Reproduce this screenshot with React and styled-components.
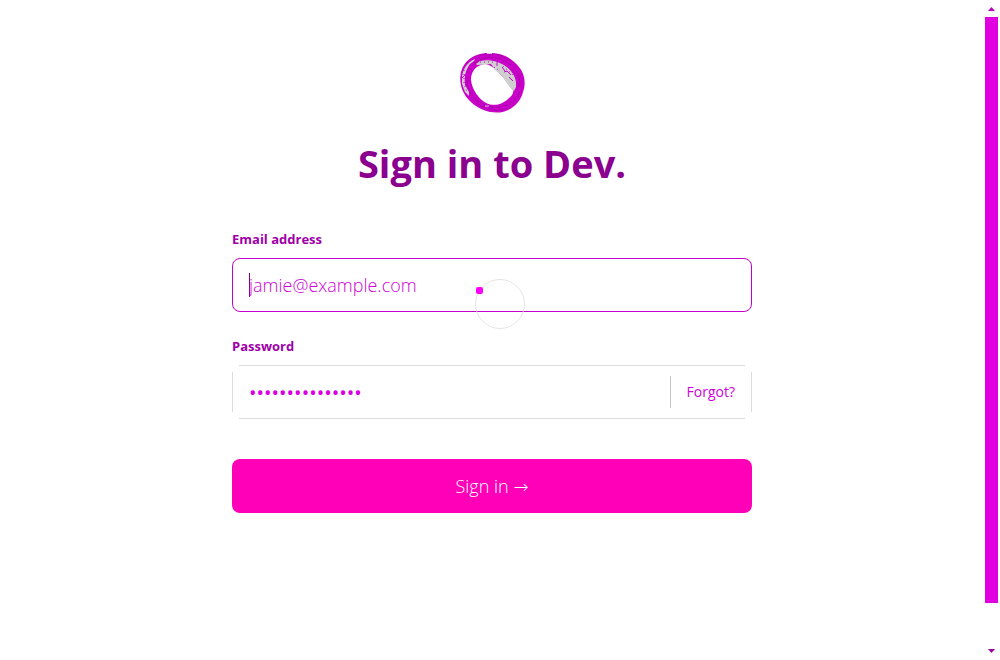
import React from "react";
import styled, { createGlobalStyle } from "styled-components";

const Global = createGlobalStyle`
  *, *::before, *::after { box-sizing: border-box; }
  body { margin: 0; background: #fff; font-family: "Open Sans", "Noto Sans", sans-serif; }
  input, button { font-family: inherit; margin: 0; }
`;

const Page = styled.div`
  display: flex;
  height: 100vh;
  overflow: hidden;
`;

const Main = styled.main`
  flex: 1;
  display: flex;
  flex-direction: column;
  align-items: center;
  padding: 50px 24px 0;
`;

const Logo = styled.svg`
  width: 72px;
  height: 66px;
`;

const Title = styled.h1`
  margin: 20px 0 40px;
  font-size: 38px;
  line-height: 54px;
  font-weight: 700;
  color: #8b008f;
`;

const Form = styled.form`
  width: 100%;
  max-width: 520px;
  display: flex;
  flex-direction: column;
`;

const Label = styled.label`
  margin-bottom: 10px;
  font-size: 13px;
  line-height: 18px;
  font-weight: 700;
  color: #a000a8;
`;

const Field = styled.div`
  position: relative;
  display: flex;
  align-items: center;
  height: 54px;
  margin-bottom: ${(p) => (p.$last ? 40 : 25)}px;
  ${(p) =>
    p.$active
      ? `border: 1px solid #c400cc; border-radius: 8px;`
      : `border: 1px solid transparent;
         background:
           linear-gradient(#dcdcdc, #dcdcdc) center top / calc(100% - 14px) 1px no-repeat border-box,
           linear-gradient(#dcdcdc, #dcdcdc) center bottom / calc(100% - 14px) 1px no-repeat border-box,
           linear-gradient(#dcdcdc, #dcdcdc) left center / 1px calc(100% - 14px) no-repeat border-box,
           linear-gradient(#dcdcdc, #dcdcdc) right center / 1px calc(100% - 14px) no-repeat border-box;`}
`;

const Input = styled.input`
  flex: 1;
  min-width: 0;
  height: 100%;
  padding: 0 16px;
  border: 0;
  outline: 0;
  background: transparent;
  font-size: 18px;
  font-weight: 300;
  color: #d800e0;
  &::placeholder { color: #d000d8; opacity: 1; }
  &[type="password"] { font-size: 20px; font-weight: 400; }
`;

const Caret = styled.span`
  position: absolute;
  left: 16px;
  top: 14px;
  width: 1px;
  height: 24px;
  background: #8b008f;
`;

const Forgot = styled.a`
  height: 32px;
  padding: 0 16px;
  border-left: 1px solid #c8c8c8;
  font-size: 14px;
  line-height: 32px;
  color: #d000d8;
  text-decoration: none;
`;

const Submit = styled.button`
  height: 54px;
  border: 0;
  border-radius: 8px;
  background: #ff00b8;
  color: #fff;
  font-size: 18px;
  font-weight: 300;
`;

const SubmitArrow = styled.span`
  font-family: "DejaVu Sans", sans-serif;
`;

const Spinner = styled.div`
  position: fixed;
  left: calc(50% - 25px);
  top: calc(50% - 51px);
  width: 50px;
  height: 50px;
  border: 1px solid #e4e4e4;
  border-radius: 50%;
  pointer-events: none;
  &::after {
    content: "";
    position: absolute;
    left: 0;
    top: 7px;
    width: 7px;
    height: 7px;
    border-radius: 2px;
    background: #ff00ff;
  }
`;

const Scrollbar = styled.div`
  width: 16px;
  padding: 0 2px 0 1px;
  display: flex;
  flex-direction: column;
`;

const Arrow = styled.svg`
  flex: none;
  width: 13px;
  height: 17px;
`;

const Thumb = styled.div`
  flex: 586;
  background: #e000e0;
`;

const Rest = styled.div`
  flex: 40;
`;

function RingLogo() {
  return (
    <Logo viewBox="456 50 72 66" aria-hidden="true">
      <path
        fillRule="evenodd"
        fill="#c800c8"
        d="M489 53C501 52 512 58 519 67C525 74 526 84 523 92C520 104 510 111 500 112.500C488 113.500 476 108 468 99C461 91 459 81 461 72C464 60 475 53 489 53ZM484 64C475 66 471 72 471 80C472 90 479 99 486 103C494 107 503 104 508 99C512 96 514 93 513 90C508 85 506 80 502 76C496 70 491 64 484 64Z"
      />
      <g fill="none" stroke="#b000b4">
        <path d="M467 80C467 92 476 103 491 107C503 109 516 102 520 91" />
        <path d="M473 65C481 56 497 55 507 62C518 69 521 79 519 87" />
        <path d="M478 56C489 52 502 54 511 61M473 100C481 109 497 113 508 108" />
      </g>
      <path fill="#cfcfcf" d="M475 59C467 62 463 69 462 77V84L465 92L469 96V92L465 85C464 76 466 69 470 64L474 61Z" />
      <path fill="#cfcfcf" d="M476 64L480 61C488 59 496 61 502 64C510 68 515 75 516 82V87L514 91C511 88 508 85 506 82L502 76L495 70L491 64L477 65Z" />
      <path fill="none" stroke="#c800c8" d="M462 78L466 74M497 62V66M502 67L505 71M504 72L507 71L511 75M509 77L513 81" />
      <path fill="none" stroke="#c800c8" strokeDasharray="1 3" d="M464 70V84L467 92M503 66L513 75M480 62H494M494 67L500 71" />
      <path stroke="#cfcfcf" d="M485 106H489M487 53.500H492" />
    </Logo>
  );
}

export default function App() {
  return (
    <>
      <Global />
      <Page>
        <Main>
          <RingLogo />
          <Title>Sign in to Dev.</Title>
          <Form onSubmit={(e) => e.preventDefault()}>
            <Label htmlFor="email">Email address</Label>
            <Field $active>
              <Input id="email" type="email" placeholder="jamie@example.com" />
              <Caret />
            </Field>
            <Label htmlFor="password">Password</Label>
            <Field $last>
              <Input id="password" type="password" defaultValue="passwordexample" />
              <Forgot href="#forgot">Forgot?</Forgot>
            </Field>
            <Submit type="submit">Sign in <SubmitArrow>→</SubmitArrow></Submit>
          </Form>
        </Main>
        <Scrollbar aria-hidden="true">
          <Arrow viewBox="0 0 13 17"><path fill="#b800c0" d="M3 11L6.500 7L10 11Z" /></Arrow>
          <Thumb />
          <Rest />
          <Arrow viewBox="0 0 13 17"><path fill="#9c00a4" d="M3 6L6.500 10L10 6Z" /></Arrow>
        </Scrollbar>
      </Page>
      <Spinner role="status" aria-label="Loading" />
    </>
  );
}
